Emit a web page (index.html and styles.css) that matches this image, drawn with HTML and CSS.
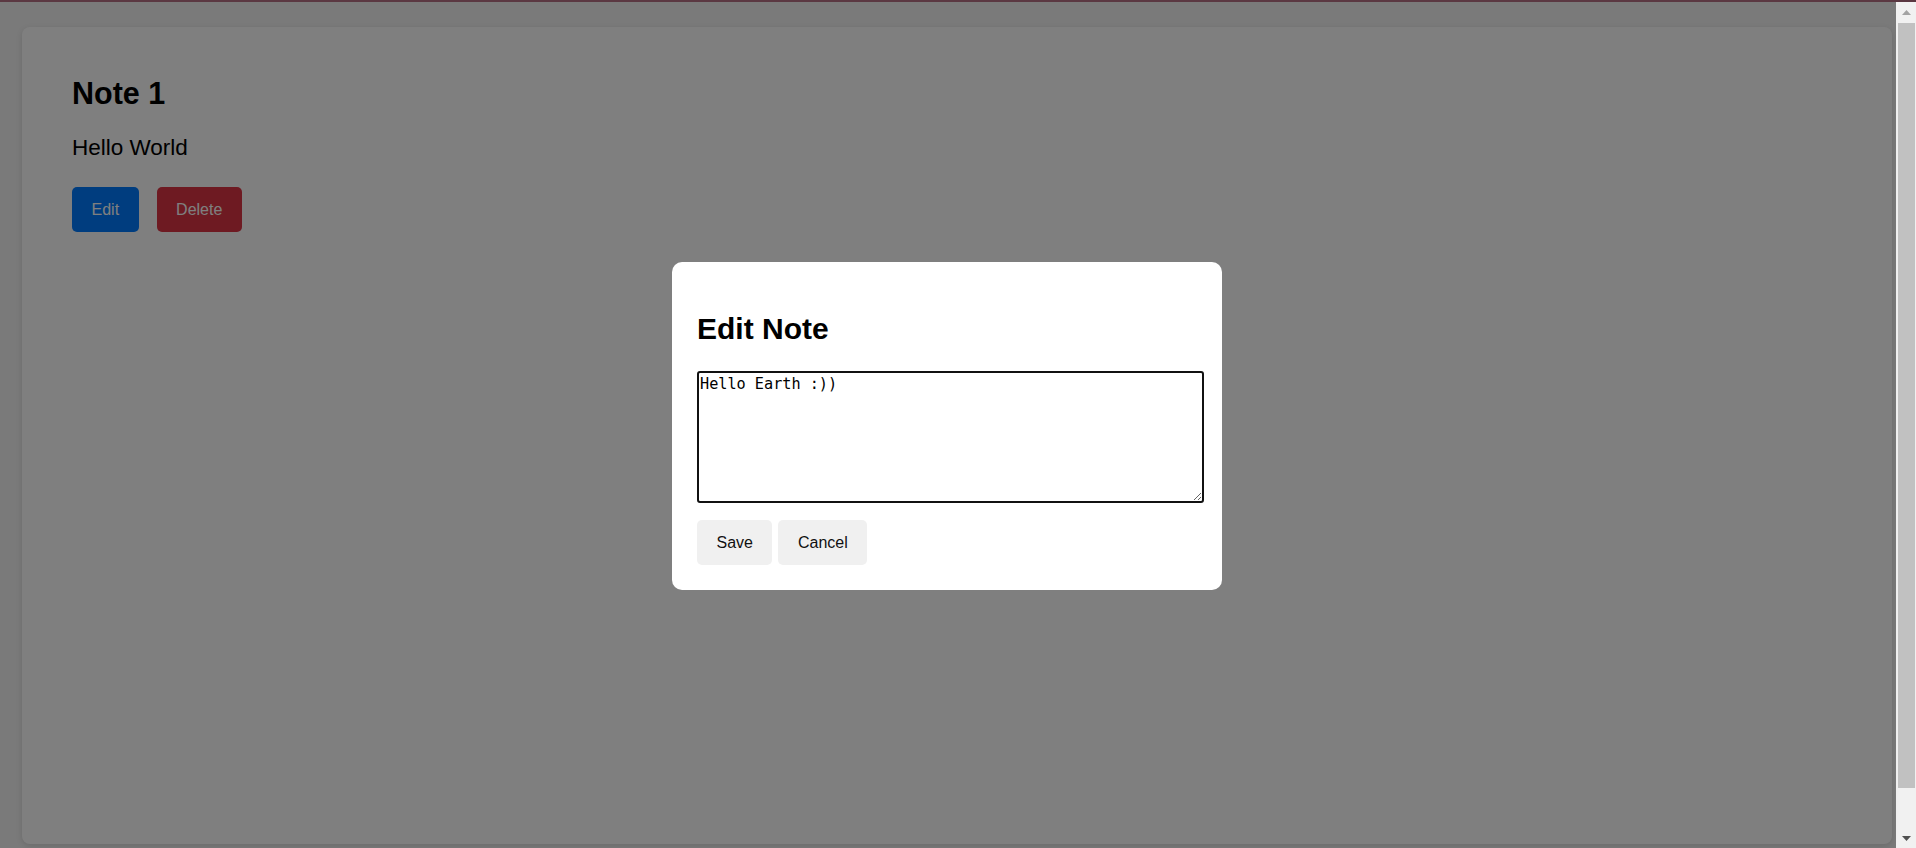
FILE: index.html
```html
<!DOCTYPE html>
<html lang="en">
<head>
<meta charset="utf-8">
<title>Notes</title>
<link rel="stylesheet" href="styles.css">
</head>
<body>
<div class="topline"></div>
<div class="window">
  <div class="page">
    <div class="card">
      <h1 class="note-title">Note 1</h1>
      <p class="note-body">Hello World</p>
      <div class="note-actions">
        <button class="btn btn-edit">Edit</button>
        <button class="btn btn-delete">Delete</button>
      </div>
    </div>
    <div class="overlay">
      <div class="modal">
        <h2 class="modal-title">Edit Note</h2>
        <textarea class="modal-text">Hello Earth :))</textarea>
        <div class="modal-actions">
          <button class="mbtn">Save</button>
          <button class="mbtn">Cancel</button>
        </div>
      </div>
    </div>
  </div>
  <div class="scrollbar">
    <div class="sb-btn sb-up">
      <svg width="9" height="5" viewBox="0 0 9 5"><polygon points="0,5 4.5,0 9,5" fill="#a3a3a3"/></svg>
    </div>
    <div class="sb-thumb"></div>
    <div class="sb-track"></div>
    <div class="sb-btn sb-down">
      <svg width="9" height="5" viewBox="0 0 9 5"><polygon points="0,0 9,0 4.5,5" fill="#505050"/></svg>
    </div>
  </div>
</div>
</body>
</html>
```
FILE: styles.css
```css
html, body {
  margin: 0;
  height: 100%;
  overflow: hidden;
}

body {
  font-family: "Liberation Sans", Arial, sans-serif;
  background: #f4f4f4;
  color: #000;
}

.topline {
  height: 2px;
  background: #5b3842;
}

.window {
  display: flex;
  height: 846px;
}

.page {
  position: relative;
  flex: 1;
  display: flex;
  flex-direction: column;
  padding: 25px 4px 4px 22px;
  background: #f4f4f4;
  box-sizing: border-box;
  min-width: 0;
}

.card {
  flex: 1;
  background: #fff;
  border-radius: 8px;
  box-shadow: 0 2px 6px rgba(0, 0, 0, 0.12);
  padding: 48px 50px;
  box-sizing: border-box;
}

.note-title {
  margin: 0;
  font-size: 30.5px;
  line-height: 37px;
  font-weight: bold;
}

.note-body {
  margin: 22.5px 0 0;
  font-size: 22.5px;
  line-height: 26px;
}

.note-actions {
  display: flex;
  gap: 18px;
  margin-top: 26.5px;
}

.btn {
  height: 45px;
  padding: 0 19.5px;
  border: 0;
  border-radius: 5px;
  color: #fff;
  font-family: "Liberation Sans", Arial, sans-serif;
  font-size: 16px;
}

.btn-edit {
  background: #007bff;
}

.btn-delete {
  background: #dc3545;
}

.overlay {
  position: absolute;
  inset: 0;
  background: rgba(0, 0, 0, 0.5);
  display: flex;
  align-items: center;
  justify-content: center;
  padding: 2px 2px 0 0;
}

.modal {
  width: 500px;
  padding: 25px;
  background: #fff;
  border-radius: 10px;
}

.modal-title {
  margin: 24.5px 0 25px;
  font-size: 30px;
  line-height: 34.5px;
  font-weight: bold;
}

.modal-text {
  display: block;
  box-sizing: content-box;
  width: 502px;
  height: 126px;
  margin: 0 0 17px;
  padding: 2px 0 0 1px;
  border: 2px solid #111;
  border-radius: 3px;
  font-family: "DejaVu Sans Mono", "Liberation Mono", monospace;
  font-size: 15.2px;
  color: #000;
  background: #fff;
  outline: none;
}

.modal-actions {
  display: flex;
  gap: 6px;
}

.mbtn {
  height: 45px;
  padding: 0 19.5px;
  border: 0;
  border-radius: 5px;
  background: #f0f0f0;
  color: #111;
  font-family: "Liberation Sans", Arial, sans-serif;
  font-size: 16px;
}

.scrollbar {
  width: 20px;
  background: #f1f1f1;
  display: flex;
  flex-direction: column;
}

.sb-btn {
  display: flex;
  align-items: center;
  justify-content: center;
}

.sb-up {
  height: 21px;
  padding-left: 1px;
}

.sb-down {
  height: 20px;
  padding-left: 1px;
}

.sb-thumb {
  height: 765px;
  margin: 0 1px 0 2px;
  background: #c1c1c1;
}

.sb-track {
  flex: 1;
}
```
